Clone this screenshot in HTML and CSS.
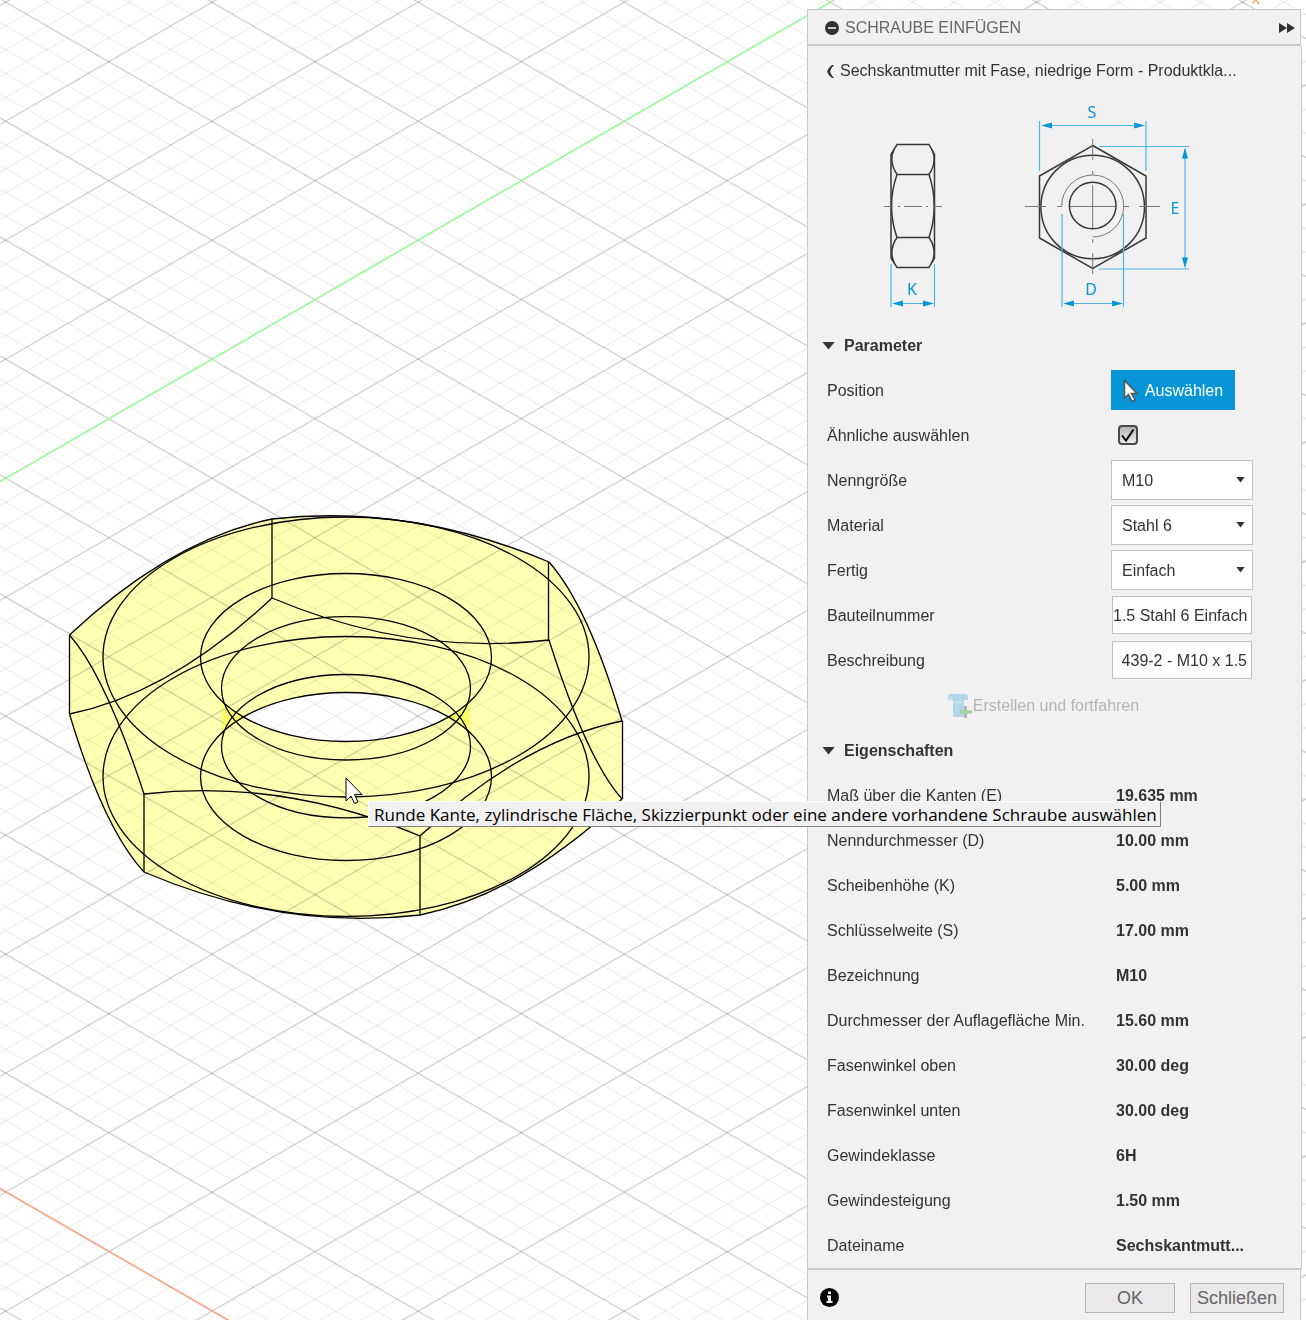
FILE: index.html
```html
<!DOCTYPE html>
<html lang="de">
<head>
<meta charset="utf-8">
<title>Schraube einfügen</title>
<meta name="viewport" content="width=device-width, initial-scale=1">
<link rel="stylesheet" href="styles.css">
</head>
<body>
<main class="workspace">
  <svg class="canvas" aria-label="Sechskantmutter im Raster" role="img">
    <g class="grid">
      <path class="grid-minor" id="grid-minor-down"/>
      <path class="grid-minor" id="grid-minor-up"/>
      <path class="grid-major" id="grid-major-down"/>
      <path class="grid-major" id="grid-major-up"/>
      <path class="axis-y" d="M-10 487.4L833 .7"/>
      <path class="axis-x" d="M-10 1182.5L246 1330.3M1252 4l4-5M1255-1l4 5"/>
    </g>
    <path class="nut-fill" fill-rule="evenodd" d="M69.5 635Q170.75 540 272 519Q410.5 503.500 549 562Q588 606 622 721V799Q521 894.500 420 915Q282 931 144 872Q104 829 69.500 714ZM243 717A145.500 84 0 0 1 449 717A145.500 84 0 0 1 243 717Z"/>
    <path class="nut-overlap" d="M222 704L243 717L222 732ZM470 704L449 717L470 732Z"/>
    <g class="nut-edges">
      <path d="M69.500 635Q170.750 540 272 519Q410.500 503.500 549 562Q588 606 622 721Q521 741.500 420 836Q282 778 144 794Q105 675 69.500 635"/>
      <path d="M69.500 714Q170.750 693 272 598Q410.500 656.500 549 640Q587 760 622 799Q521 894.500 420 915Q282 931 144 872Q104 829 69.500 714"/>
      <path d="M69.500 635V714M272 519V598M548.500 562V640M622.500 721V799M420 836V915M144 794V872"/>
      <ellipse cx="346" cy="657" rx="243" ry="140"/>
      <ellipse cx="346" cy="776.500" rx="243" ry="140"/>
      <ellipse cx="346" cy="657.500" rx="145.500" ry="84"/>
      <ellipse cx="346" cy="776.500" rx="145.500" ry="84"/>
      <ellipse cx="346" cy="688.300" rx="124.500" ry="71.700"/>
      <ellipse cx="346" cy="746.200" rx="124.500" ry="71.700"/>
    </g>
  </svg>

  <section class="panel" aria-labelledby="panel-title">
    <header class="panel-head">
      <svg class="icon-minus" width="14" height="14" viewBox="0 0 14 14" aria-hidden="true"><circle cx="7" cy="7" r="7" fill="#333"/><path d="M3 7h8" stroke="#c8c8c8" stroke-width="2"/></svg>
      <h1 class="panel-title" id="panel-title">SCHRAUBE EINFÜGEN</h1>
      <svg class="icon-forward" width="16" height="10" viewBox="0 0 16 10" aria-hidden="true"><path d="M0 0l8 5-8 5zM8 0l8 5-8 5z" fill="#333"/></svg>
    </header>

    <form class="panel-body">
      <a class="back" href="#">
        <svg width="7" height="13" viewBox="0 0 7 13" aria-hidden="true"><path d="M7 0H5Q1 3 0 6.500Q1 10 5 13H7Q4 10 3 6.500Q4 3 7 0z" fill="#333"/></svg>
        <span>Sechskantmutter mit Fase, niedrige Form - Produktkla...</span>
      </a>

      <svg class="drawing" viewBox="827 92 426 230" role="img" aria-label="Maße K, S, E und D der Mutter">
        <g class="part">
          <path d="M891 154.500L897 144.500H929L934.500 154.500V258L929 267.500H897L891 258Z"/>
          <path d="M897 174.500H929M897 237.500H929"/>
          <path d="M894 149.500Q888.500 162 897 174.500Q886 206 897 237.500Q888.500 250 894 262.500M932 149.500Q937.500 162 929 174.500Q939.500 206 929 237.500Q937.500 250 932 262.500"/>
          <path d="M1092.700 145.500L1146 176V238L1092.700 268.500L1039.500 238V176Z"/>
          <circle cx="1092.700" cy="207" r="51.800"/>
          <circle cx="1092.700" cy="205.500" r="23.300"/>
        </g>
        <g class="center">
          <path d="M884 206.500h9M898 206.500h2M904 206.500h18M926 206.500h2M933 206.500h9"/>
          <path d="M1025 206.500h21M1057 206.500h5M1070 206.500h45M1124 206.500h5M1139 206.500h21"/>
          <path d="M1092.700 139v21M1092.700 171v4M1092.700 185v43M1092.700 239v4M1092.700 253v21"/>
          <path d="M1061.700 206A31 31 0 1 1 1092.700 237"/>
        </g>
        <g class="dims">
          <path d="M891 264v43M934.500 264v43M894 303.500h38"/>
          <path d="M1062 214v93M1123.500 214v93M1065 303.500h56"/>
          <path d="M1039.500 121v50M1146 121v50M1043 125.500h100"/>
          <path d="M1099 146.500h90M1099 269h90M1185 150v116"/>
        </g>
        <path class="arrows" d="M892 303.500l11-3v6zM934 303.500l-11-3v6zM1063 303.500l11-3v6zM1123 303.500l-11-3v6zM1041 125.500l11-3v6zM1145 125.500l-11-3v6zM1185 147.500l-3 11h6zM1185 268.500l-3-11h6z"/>
        <g class="letters">
          <text x="912" y="295">K</text><text x="1092" y="118">S</text><text x="1175" y="214">E</text><text x="1091" y="295">D</text>
        </g>
      </svg>

      <h2 class="section">Parameter</h2>
      <div class="row">
        <span class="label">Position</span>
        <button class="pick" type="button">
          <svg width="16" height="24" viewBox="0 0 16 24" aria-hidden="true"><path d="M1.500 1.500V19l4-3.500 3.500 7 3-1.500-3.500-6.500H14z" fill="#fff" stroke="#555" stroke-width="1.500"/></svg>
          Auswählen
        </button>
      </div>
      <div class="row">
        <label class="label" for="similar">Ähnliche auswählen</label>
        <span class="tick"><input id="similar" type="checkbox" checked><svg width="20" height="20" viewBox="0 0 20 20" aria-hidden="true"><path d="M4 10.500L8 15.500L15.500 4.500" fill="none" stroke="#000" stroke-width="2"/></svg></span>
      </div>
      <div class="row">
        <label class="label" for="size">Nenngröße</label>
        <span class="select"><select id="size"><option>M10</option></select></span>
      </div>
      <div class="row">
        <label class="label" for="material">Material</label>
        <span class="select"><select id="material"><option>Stahl 6</option></select></span>
      </div>
      <div class="row">
        <label class="label" for="finish">Fertig</label>
        <span class="select"><select id="finish"><option>Einfach</option></select></span>
      </div>
      <div class="row">
        <label class="label" for="number">Bauteilnummer</label>
        <input class="field" id="number" type="text" value="1.5 Stahl 6 Einfach">
      </div>
      <div class="row">
        <label class="label" for="description">Beschreibung</label>
        <input class="field" id="description" type="text" value="439-2 - M10 x 1.5">
      </div>
      <div class="row-action">
        <button class="create" type="button" disabled>
          <svg width="26" height="26" viewBox="0 0 26 26" aria-hidden="true"><path d="M1 4q0-3 3-3h14q3 0 3 3v3H17v17H6V7H1z" fill="#b3d7e8"/><path d="M4 7V4M7 10l2-1 2 1 2-1 2 1" fill="none" stroke="#dceef5"/><path d="M18.500 13v12" stroke="#b5b5b5" stroke-width="3"/><path d="M13 19h12" stroke="#b5b5b5" stroke-width="3"/><path d="M13 19h11" stroke="#8fe08f" stroke-width="2"/></svg>
          Erstellen und fortfahren
        </button>
      </div>

      <h2 class="section">Eigenschaften</h2>
      <table class="props">
        <tbody>
          <tr><th scope="row">Maß über die Kanten (E)</th><td>19.635 mm</td></tr>
          <tr><th scope="row">Nenndurchmesser (D)</th><td>10.00 mm</td></tr>
          <tr><th scope="row">Scheibenhöhe (K)</th><td>5.00 mm</td></tr>
          <tr><th scope="row">Schlüsselweite (S)</th><td>17.00 mm</td></tr>
          <tr><th scope="row">Bezeichnung</th><td>M10</td></tr>
          <tr><th scope="row">Durchmesser der Auflagefläche Min.</th><td>15.60 mm</td></tr>
          <tr><th scope="row">Fasenwinkel oben</th><td>30.00 deg</td></tr>
          <tr><th scope="row">Fasenwinkel unten</th><td>30.00 deg</td></tr>
          <tr><th scope="row">Gewindeklasse</th><td>6H</td></tr>
          <tr><th scope="row">Gewindesteigung</th><td>1.50 mm</td></tr>
          <tr><th scope="row">Dateiname</th><td>Sechskantmutt...</td></tr>
        </tbody>
      </table>
    </form>

    <footer class="panel-foot">
      <svg class="icon-info" width="19" height="19" viewBox="0 0 19 19" role="img" aria-label="Info"><circle cx="9.500" cy="9.500" r="9.500" fill="#000"/><path d="M8 3.500h3v2.500H8zM7 7.500h4V13h1.500v2h-6v-2H8V9.500H7z" fill="#f1f1f1"/></svg>
      <button class="foot-btn" type="button">OK</button>
      <button class="foot-btn" type="button">Schließen</button>
    </footer>
  </section>

  <svg class="cursor" width="18" height="28" viewBox="0 0 18 28" aria-hidden="true"><path d="M1 1V24l5-5 3.500 7.500 3.500-1.500-3.500-7.500H17z" fill="#fff" stroke="#000"/></svg>
  <div class="tooltip" role="tooltip">Runde Kante, zylindrische Fläche, Skizzierpunkt oder eine andere vorhandene Schraube auswählen</div>
</main>
<script src="grid.js"></script>
</body>
</html>
```
FILE: styles.css
```css
* { box-sizing: border-box; }

body {
  margin: 0;
  background: #fff;
  color: #333;
  font: 16px/20px "Liberation Sans", Arial, sans-serif;
}

.workspace {
  position: relative;
  display: flex;
  justify-content: flex-end;
  min-height: 100vh;
  padding: 9px 4px 0 0;
  overflow: hidden;
}

/* Model view */
.canvas {
  position: absolute;
  inset: 0;
  width: 100%;
  height: 100%;
}
.grid path { fill: none; }
.grid .grid-minor { stroke: rgba(0, 0, 0, .06); stroke-width: 1.3; }
.grid .grid-major { stroke: rgba(0, 0, 0, .18); stroke-width: 1.3; }
.grid .axis-y { stroke: #96ff96; stroke-width: 1.5; }
.grid .axis-x { stroke: #ffa680; stroke-width: 1.5; }
.nut-fill { fill: #ffffb2; mix-blend-mode: multiply; }
.nut-overlap { fill: rgba(255, 255, 0, .4); }
.nut-edges { fill: none; stroke: #000; stroke-width: 1.3; stroke-linejoin: round; }

.cursor { position: absolute; left: 345px; top: 777px; }
.tooltip {
  position: absolute;
  left: 368px;
  top: 801px;
  padding: 3px 3px 1px 5px;
  border: 1px solid #fff;
  border-right-color: #808080;
  border-bottom-color: #808080;
  background: #f1f1f1;
  color: #000;
  font: 17px/20px "Open Sans", "Noto Sans", sans-serif;
  white-space: nowrap;
}

/* Dialog */
.panel {
  position: relative;
  display: flex;
  flex-direction: column;
  width: 495px;
}
.panel-head {
  display: flex;
  align-items: center;
  gap: 6px;
  height: 37px;
  margin-right: 1px;
  padding: 2px 5px 0 17px;
  border: 1px solid #c8c8c8;
  border-bottom-width: 2px;
  background: #f1f1f1;
}
.panel-title {
  flex: 1;
  margin: 0;
  color: #666;
  font-size: 16px;
  font-weight: normal;
}
.panel-body {
  padding: 3px 48px 1px 19px;
  border: 1px solid #c8c8c8;
  border-top: 0;
  border-bottom-width: 2px;
  background: #f1f1f1;
}
.back {
  display: flex;
  align-items: center;
  gap: 6px;
  height: 42px;
  padding-top: 2px;
  color: #333;
  text-decoration: none;
  white-space: nowrap;
}
.drawing { display: block; width: 100%; margin-top: 1px; }
.part { fill: none; stroke: #383838; stroke-width: 1.5; }
.center { fill: none; stroke: #777; }
.dims { fill: none; stroke: #4fb4e6; stroke-width: 1.2; }
.arrows { fill: #0696d7; }
.letters { fill: #0696d7; font: 16px "Noto Sans", sans-serif; text-anchor: middle; }

.section {
  display: flex;
  align-items: center;
  gap: 9px;
  height: 45px;
  margin: 0 0 0 -5px;
  padding-top: 2px;
  font-size: 16px;
}
.section::before {
  content: "";
  width: 13px;
  height: 8px;
  background: #333;
  clip-path: polygon(0 0, 100% 0, 50% 100%);
}
.row {
  display: grid;
  grid-template-columns: 1fr 142px;
  align-items: center;
  height: 45px;
}
.label { padding-top: 2px; }
.row-action {
  display: flex;
  align-items: center;
  justify-content: center;
  height: 45px;
  padding: 2px 0 0 6px;
}

.pick {
  display: flex;
  align-items: center;
  justify-content: center;
  gap: 6px;
  width: 124px;
  height: 40px;
  padding: 2px 0 0;
  border: 0;
  background: #0696d7;
  color: #fff;
  font: inherit;
}
.tick { display: grid; width: 20px; height: 20px; margin-left: 7px; }
.tick input {
  grid-area: 1 / 1;
  width: 20px;
  height: 20px;
  margin: 0;
  appearance: none;
  border: 2px solid #4a4a4a;
  border-radius: 4px;
  background: linear-gradient(#b4b4b4, #ececec);
}
.tick svg { grid-area: 1 / 1; z-index: 1; pointer-events: none; }
.select { display: grid; align-items: center; }
.select select {
  grid-area: 1 / 1;
  width: 100%;
  height: 40px;
  padding: 2px 24px 0 10px;
  appearance: none;
  border: 1px solid #c3c3c3;
  border-radius: 0;
  background: #fff;
  color: #333;
  font: inherit;
}
.select::after {
  content: "";
  grid-area: 1 / 1;
  justify-self: end;
  width: 9px;
  height: 6px;
  margin-right: 8px;
  background: #333;
  clip-path: polygon(0 0, 100% 0, 50% 100%);
  pointer-events: none;
}
.field {
  width: 140px;
  height: 38px;
  margin: 0 auto;
  padding: 2px 4px 0 0;
  border: 1px solid #c3c3c3;
  background: #fff;
  color: #333;
  font: inherit;
  text-align: right;
}
.create {
  display: flex;
  align-items: center;
  padding: 0;
  border: 0;
  background: none;
  color: #b4b4b4;
  font: inherit;
}

.props { width: 100%; border-collapse: collapse; table-layout: fixed; }
.props tr { height: 45px; }
.props th { padding: 2px 0 0; font-weight: normal; text-align: left; white-space: nowrap; }
.props td { width: 137px; padding: 2px 0 0; font-weight: bold; white-space: nowrap; }

.panel-foot {
  display: flex;
  flex: 1;
  align-items: flex-start;
  gap: 15px;
  margin-right: 1px;
  padding: 13px 16px 7px 12px;
  border: solid #c8c8c8;
  border-width: 0 1px;
  background: #f1f1f1;
}
.icon-info { margin: 5px auto 0 0; }
.foot-btn {
  min-width: 90px;
  height: 30px;
  padding: 0 6px;
  border: 1px solid #b4b4b4;
  background: #e9e9e9;
  color: #666;
  font: 18px/20px "Liberation Sans", Arial, sans-serif;
}
```
FILE: grid.js
```js
// Isometric ground grid: every fifth line is a major one.
const CELL_W = 206.15;
const CELL_H = 119;
const ORIGIN = { x: 5.75, y: 2.2 };

function gridPaths(width, height) {
  const slope = CELL_H / CELL_W;
  const step = CELL_H / 5;
  const rise = slope * width;
  const paths = { "minor-down": "", "minor-up": "", "major-down": "", "major-up": "" };
  const first = -Math.ceil(rise / step) - 10;
  const last = Math.ceil((height + rise) / step) + 10;
  for (let i = first; i <= last; i++) {
    const kind = i % 5 === 0 ? "major" : "minor";
    const down = ORIGIN.y - slope * ORIGIN.x + i * step;
    const up = ORIGIN.y + slope * ORIGIN.x + i * step;
    paths[kind + "-down"] += `M0 ${down}L${width} ${down + rise}`;
    paths[kind + "-up"] += `M0 ${up}L${width} ${up - rise}`;
  }
  return paths;
}

function drawGrid() {
  const box = document.querySelector(".canvas").getBoundingClientRect();
  const paths = gridPaths(box.width, box.height);
  for (const [name, d] of Object.entries(paths)) {
    document.getElementById("grid-" + name).setAttribute("d", d);
  }
}

drawGrid();
window.addEventListener("resize", drawGrid);
```
